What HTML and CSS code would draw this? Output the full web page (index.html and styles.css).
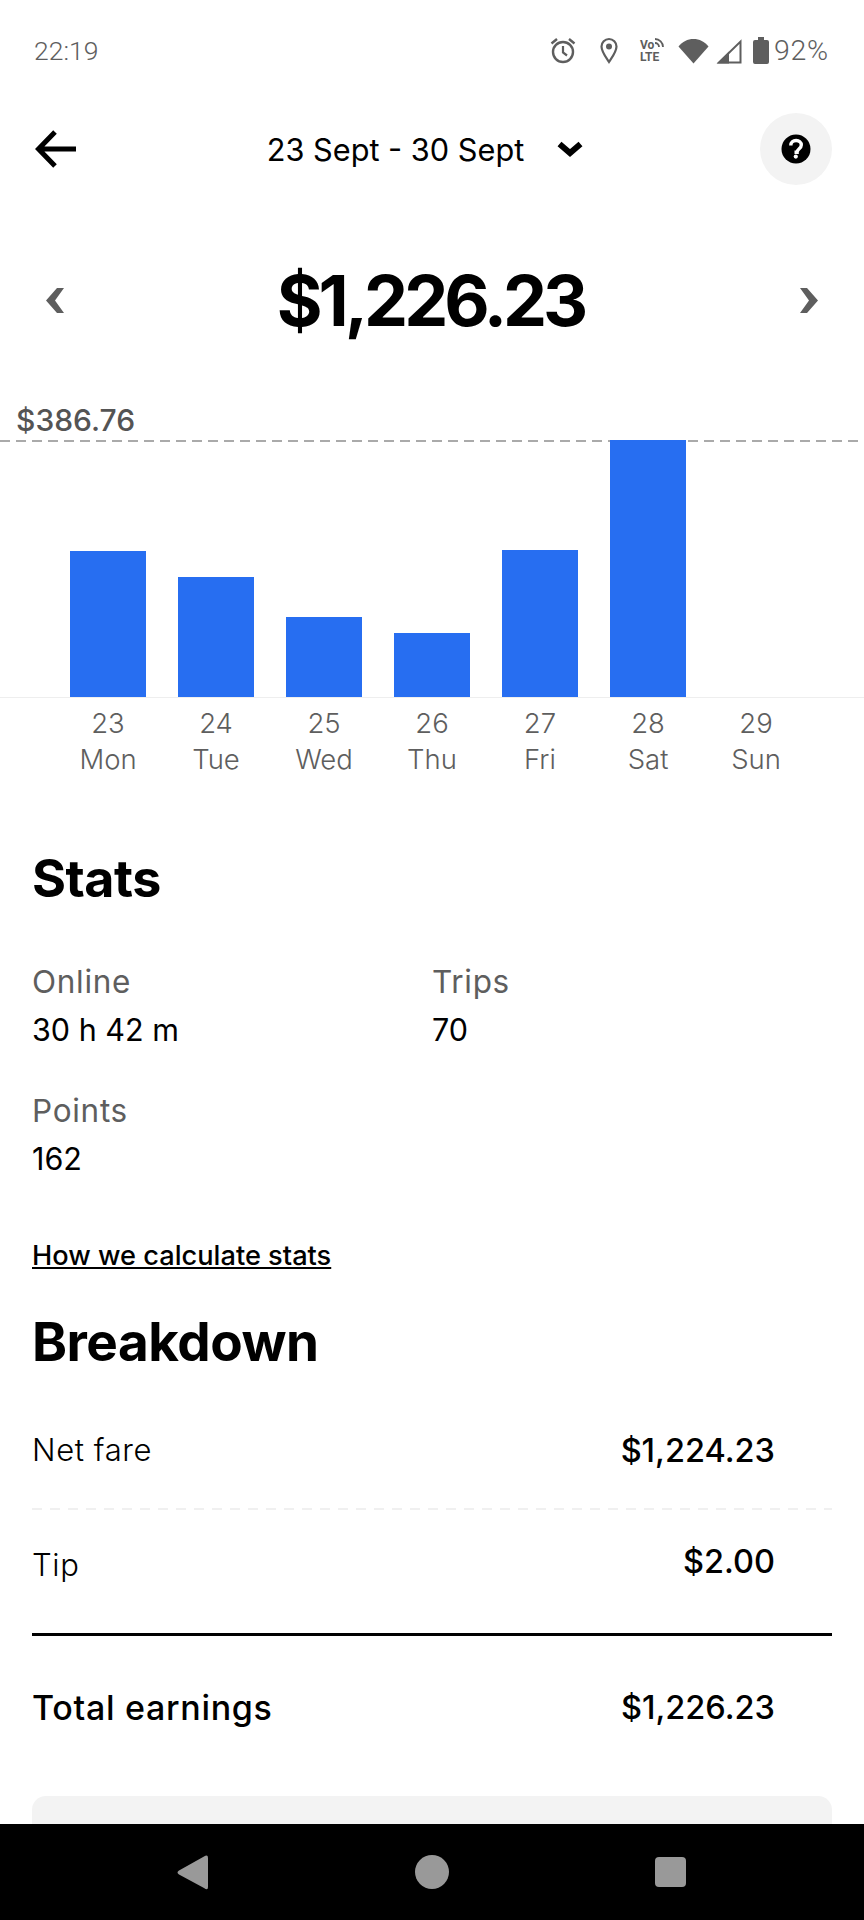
FILE: index.html
```html
<!DOCTYPE html>
<html lang="en">
<head>
    <meta charset="UTF-8" />
    <meta name="viewport" content="width=device-width, initial-scale=1" />
    <title>Weekly Earnings</title>
    <link rel="stylesheet" href="styles.css">
</head>
<body>
    <div class="content">
        <div class="status-bar">
            <span class="time">22:19</span>
            <div class="status-icons">
                <svg class="icon-alarm" width="26" height="27" viewBox="0 0 26 27"><circle cx="13" cy="15" r="10" fill="none" stroke="#5e5e5e" stroke-width="2.4"/><path d="M13 9v6.5l4 3" fill="none" stroke="#5e5e5e" stroke-width="2.2"/><path d="M1.5 6.5 7 2M24.5 6.5 19 2" fill="none" stroke="#5e5e5e" stroke-width="2.4"/></svg>
                <svg class="icon-pin" width="18" height="27" viewBox="0 0 18 27"><path d="M9 25C5 19 1.5 14.500 1.500 9.500a7.500 7.500 0 0 1 15 0C16.500 14.500 13 19 9 25z" fill="none" stroke="#5e5e5e" stroke-width="2.200"/><circle cx="9" cy="9.500" r="3" fill="#5e5e5e"/></svg>
                <div class="volte">
                    <span class="volte-top">Vo<svg width="10" height="11" viewBox="0 0 10 11"><path d="M1 5a4 4 0 0 1 4 4M1 1a8 8 0 0 1 8 8" fill="none" stroke="#5e5e5e" stroke-width="1.800"/></svg></span>
                    <span class="volte-bottom">LTE</span>
                </div>
                <svg class="icon-wifi" width="31" height="26" viewBox="0 0 31 26"><path d="M15.500 25.500 0.500 8.500C4.500 3.500 9.500 1 15.500 1s11 2.500 15 7.500z" fill="#5e5e5e"/></svg>
                <svg class="icon-signal" width="26" height="26" viewBox="0 0 26 26"><path d="M24.500 3.500V24.500H3z" fill="none" stroke="#5e5e5e" stroke-width="2"/><path d="M1 25.500 13 13.500V25.500z" fill="#5e5e5e"/></svg>
                <svg class="icon-battery" width="16" height="27" viewBox="0 0 16 27"><path d="M5 0h6v3h3a2 2 0 0 1 2 2v20a2 2 0 0 1-2 2H2a2 2 0 0 1-2-2V5a2 2 0 0 1 2-2h3z" fill="#5e5e5e"/></svg>
                <span class="battery-level">92%</span>
            </div>
        </div>

        <div class="header">
            <svg class="back" width="42" height="38" viewBox="0 0 42 38"><path d="M41 19H4M20 2 3.500 19 20 36" fill="none" stroke="#000" stroke-width="5"/></svg>
            <div class="date-range">
                <span>23 Sept - 30 Sept</span>
                <svg width="26" height="17" viewBox="0 0 26 17"><path d="M2.500 3 13 12 23.500 3" fill="none" stroke="#000" stroke-width="6"/></svg>
            </div>
            <div class="help">
                <svg width="30" height="30" viewBox="0 0 30 30"><circle cx="15" cy="15" r="14.500" fill="#000"/><path d="M9.800 11.500c0-3.200 2.300-5 5.300-5s5.200 1.800 5.200 4.500c0 3.700-4.200 3.700-4.200 7.300h-2.600" fill="none" stroke="#fff" stroke-width="3.400"/><circle cx="14.800" cy="22.600" r="2.100" fill="#fff"/></svg>
            </div>
        </div>

        <div class="total-row">
            <svg width="18" height="25" viewBox="0 0 18 25"><path d="M11 0h7L9 12.500 18 25h-7L0 12.500z" fill="#5e5e5e"/></svg>
            <span class="total">$1,226.23</span>
            <svg width="18" height="25" viewBox="0 0 18 25"><path d="M7 0H0l9 12.500L0 25h7l11-12.500z" fill="#5e5e5e"/></svg>
        </div>

        <div class="chart">
            <div class="chart-max">$386.76</div>
            <div class="plot">
                <div class="col"><div class="bar" style="height: 146px"></div></div>
                <div class="col"><div class="bar" style="height: 120px"></div></div>
                <div class="col"><div class="bar" style="height: 80px"></div></div>
                <div class="col"><div class="bar" style="height: 64px"></div></div>
                <div class="col"><div class="bar" style="height: 147px"></div></div>
                <div class="col"><div class="bar" style="height: 257px"></div></div>
                <div class="col"></div>
            </div>
            <div class="days">
                <div class="day">23<br>Mon</div>
                <div class="day">24<br>Tue</div>
                <div class="day">25<br>Wed</div>
                <div class="day">26<br>Thu</div>
                <div class="day">27<br>Fri</div>
                <div class="day">28<br>Sat</div>
                <div class="day">29<br>Sun</div>
            </div>
        </div>

        <h2 class="stats-title">Stats</h2>
        <div class="stats">
            <div class="stat"><div class="stat-label">Online</div><div class="stat-value">30 h 42 m</div></div>
            <div class="stat"><div class="stat-label">Trips</div><div class="stat-value">70</div></div>
            <div class="stat"><div class="stat-label">Points</div><div class="stat-value">162</div></div>
        </div>
        <a class="stats-link" href="#">How we calculate stats</a>

        <h2 class="breakdown-title">Breakdown</h2>
        <div class="line line-dashed"><span class="line-name">Net fare</span><span class="line-amount amount-net">$1,224.23</span></div>
        <div class="line line-tip"><span class="line-name">Tip</span><span class="line-amount amount-tip">$2.00</span></div>
        <div class="line line-total"><span class="total-name">Total earnings</span><span class="line-amount">$1,226.23</span></div>
        <div class="card"></div>
    </div>

    <div class="nav-bar">
        <svg width="32" height="35" viewBox="0 0 32 35"><path d="M2 15.500 27 1.500Q31 -1 31 3V32Q31 36 27 33L2 19.500Q-1 17.500 2 15.500z" fill="#999"/></svg>
        <div class="nav-home"></div>
        <div class="nav-recent"></div>
    </div>
</body>
</html>
```

FILE: styles.css
```css
* { box-sizing: border-box; }
html, body { margin: 0; padding: 0; }
body {
    width: 864px;
    height: 1920px;
    overflow: hidden;
    display: flex;
    flex-direction: column;
    background-color: #fff;
    color: #000;
    font-family: Inter, "Liberation Sans", sans-serif;
}
.content { flex: 1; overflow: hidden; }

/* status bar */
.status-bar {
    height: 100px;
    padding: 1px 35px 0 34px;
    display: flex;
    align-items: center;
    justify-content: space-between;
    color: #5e5e5e;
    font-family: Roboto, sans-serif;
    font-weight: 300;
    font-size: 26.500px;
}
.status-icons { display: flex; align-items: center; }
.battery-level { font-size: 28.500px; letter-spacing: 0.800px; }
.icon-alarm { margin-right: 24px; }
.icon-pin { margin-right: 22px; }
.volte { width: 28px; margin-right: 10px; font-weight: 700; font-size: 12px; line-height: 12px; }
.volte-top, .volte-bottom { display: block; white-space: nowrap; }
.icon-wifi { margin-right: 7px; }
.icon-signal { margin-right: 11px; }
.icon-battery { margin-right: 5px; }

/* header */
.header {
    height: 98px;
    display: flex;
    align-items: center;
    padding: 0 32px 0 35px;
}
.date-range {
    flex: 1;
    display: flex;
    align-items: center;
    justify-content: center;
    gap: 33px;
    margin-left: 13px;
    font-size: 30.700px;
}
.help {
    width: 72px;
    height: 72px;
    border-radius: 50%;
    background-color: #f3f3f3;
    display: flex;
    align-items: center;
    justify-content: center;
}

/* total */
.total-row {
    height: 104px;
    margin-top: 50px;
    padding: 0 46px;
    display: flex;
    align-items: center;
    justify-content: space-between;
}
.total { margin-right: 3px; font-size: 70px; font-weight: 700; letter-spacing: -4px; }

/* chart */
.chart { margin-top: 49px; }
.chart-max { padding-left: 16px; font-size: 30px; font-weight: 450; color: #545454; height: 39px; line-height: 39px; }
.plot {
    height: 258px;
    padding-left: 54px;
    display: flex;
    align-items: flex-end;
    border-bottom: 1px solid #eeeeee;
    background-image: repeating-linear-gradient(to right, #aaaaaa 0 10px, transparent 10px 16px);
    background-size: 100% 2px;
    background-repeat: no-repeat;
}
.col { width: 108px; display: flex; justify-content: center; }
.bar { width: 76px; background-color: #276ef1; }
.days { display: flex; padding: 7px 0 0 54px; }
.day { width: 108px; text-align: center; font-size: 27.500px; line-height: 36px; color: #5e5e5e; font-weight: 300; }

/* stats */
.stats-title, .breakdown-title { margin: 0; padding-left: 32px; font-weight: 700; letter-spacing: -0.5px; }
.stats-title { margin-top: 71px; font-size: 52px; line-height: 62px; }
.stats { margin-top: 52px; padding-left: 32px; display: grid; grid-template-columns: 400px 1fr; row-gap: 41px; }
.stat-label { font-size: 31.500px; letter-spacing: 0.700px; line-height: 40px; color: #5e5e5e; }
.stat-value { margin-top: 8px; font-size: 30.500px; line-height: 40px; }
.stats-link {
    display: inline-block;
    margin: 59px 0 0 32px;
    font-size: 27.200px;
    line-height: 36px;
    font-weight: 500;
    color: #000;
}
.breakdown-title { margin-top: 34px; font-size: 53px; line-height: 68px; }

/* earnings lines */
.line {
    margin: 0 32px;
    padding-right: 57px;
    display: flex;
    justify-content: space-between;
}
.line-name { font-size: 31px; font-weight: 350; letter-spacing: 0.600px; }
.line-amount { font-weight: 500; font-size: 32.500px; }
.amount-tip { margin-top: -4px; }
.line-dashed {
    margin-top: 25px;
    height: 109px;
    padding-top: 30px;
    background-image: repeating-linear-gradient(to right, #f0f0f0 0 10px, transparent 10px 18px);
    background-size: 100% 2px;
    background-position: bottom;
    background-repeat: no-repeat;
}
.line-tip { height: 126px; padding-top: 36px; border-bottom: 3px solid #000; }
.line-total { height: 108px; align-items: center; padding-top: 34px; }
.total-name { font-size: 34px; font-weight: 500; letter-spacing: 0.700px; }
.card { margin: 52px 32px 0; height: 100px; border-radius: 14px; background-color: #f3f3f3; }

/* android nav */
.nav-bar {
    flex: none;
    height: 96px;
    padding-left: 177px;
    background-color: #000;
    display: flex;
    align-items: center;
}
.nav-home { width: 34px; height: 34px; border-radius: 50%; background-color: #999; margin-left: 206px; }
.nav-recent { width: 31px; height: 30px; border-radius: 4px; background-color: #999; margin-left: 206px; }
```
